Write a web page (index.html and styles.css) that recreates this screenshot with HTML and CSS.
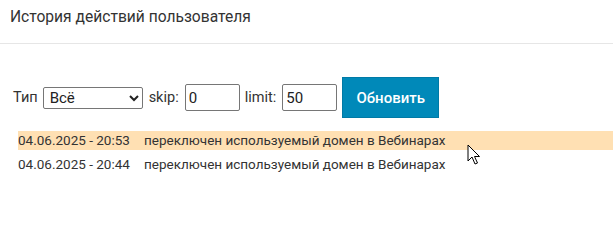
FILE: index.html
```html
<!DOCTYPE html>
<html lang="ru">
<head>
<meta charset="utf-8">
<link rel="stylesheet" href="styles.css">
</head>
<body>
<div class="header">История действий пользователя</div>
<div class="content">
  <form class="filters">
    <label class="lbl lbl-first">Тип</label>
    <select class="sel"><option>Всё</option></select>
    <label class="lbl">skip:</label>
    <input class="inp" type="text" value="0">
    <label class="lbl">limit:</label>
    <input class="inp" type="text" value="50">
    <button class="btn" type="button">Обновить</button>
  </form>
  <div class="log">
    <div class="row hl"><span class="time">04.06.2025 - 20:53</span><span class="msg">переключен используемый домен в Вебинарах</span></div>
    <div class="row"><span class="time">04.06.2025 - 20:44</span><span class="msg">переключен используемый домен в Вебинарах</span></div>
  </div>
</div>
<svg class="cursor" width="14" height="22" viewBox="0 0 14 22"><path d="M1 1 L1 17 L5 13 L8 20 L10.5 19 L7.5 12.5 L12.5 12.5 Z" fill="#fff" stroke="#000" stroke-width="1" stroke-linejoin="miter"/></svg>
</body>
</html>
```
FILE: styles.css
```css
html, body { margin: 0; padding: 0; background: #fff; }
body { font-family: Roboto, "Noto Sans", sans-serif; color: #333; position: relative; width: 613px; height: 201px; overflow: hidden; }
.header { height: 44px; box-sizing: border-box; padding: 7px 10px 0 10px; font-size: 15.6px; line-height: 20px; color: #333; border-bottom: 1px solid #e6e6e6; }
.content { padding: 33px 0 0 13px; }
.filters { display: flex; align-items: center; margin: 0; height: 41px; }
.lbl { font-size: 14.5px; margin-right: 6px; color: #333; }
.lbl-first { margin-right: 5px; }
.sel { width: 100px; height: 22px; margin: 0 6px 0 0; font-family: Roboto, sans-serif; font-size: 15px; color: #222; border: 1px solid #767676; border-radius: 2px; background: #fff; padding: 0 2px; }
.inp { width: 55px; height: 27px; box-sizing: border-box; margin: 0 5px 0 0; font-family: Roboto, sans-serif; font-size: 15px; color: #222; border: 1px solid #767676; border-radius: 2px; padding: 1px 3px; }
.btn { height: 41px; width: 97px; background: #0089b9; color: #fff; border: 1px solid #007aa6; border-radius: 0; font-family: Roboto, sans-serif; font-size: 15px; font-weight: 500; padding: 0; }
.log { margin: 13px 0 0 5px; }
.row { display: flex; font-size: 13.5px; line-height: 19px; height: 19px; margin-bottom: 5px; color: #333; }
.row.hl { background: #ffe0b3; }
.time { width: 126px; flex: none; }
.cursor { position: absolute; left: 467px; top: 144px; }
```
